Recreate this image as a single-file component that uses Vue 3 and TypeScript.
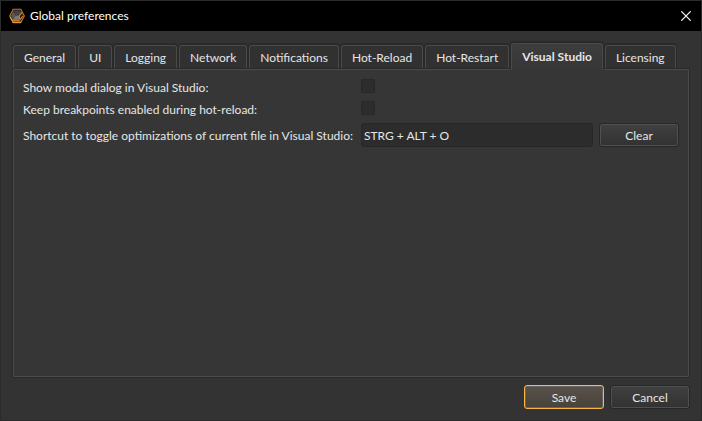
<script setup lang="ts">
import { ref } from 'vue'

const tabs: string[] = [
  'General',
  'UI',
  'Logging',
  'Network',
  'Notifications',
  'Hot-Reload',
  'Hot-Restart',
  'Visual Studio',
  'Licensing',
]
const active = ref('Visual Studio')
const modalDialog = ref(false)
const keepBreakpoints = ref(false)
const shortcut = ref('STRG + ALT + O')
</script>

<template>
  <div class="window">
    <header class="titlebar">
      <svg class="logo" viewBox="0 0 16 16" aria-hidden="true">
        <path d="M4.2 1.2h7.6L15.3 8l-3.5 6.6H4.2L.7 8z" fill="#1c140c" stroke="#c87a20" stroke-width="1.1" />
        <path d="M4.4 2.6h6.4L13 6 9.6 7.6H6.4z" fill="#42444a" />
        <path d="M4.2 3 6.6 7.4 4.2 11.4 2 8z" fill="#56585c" />
        <path d="M6.6 7.4h3.2l1.4 3.8h-7z" fill="#75777b" />
        <path d="M13 4.4 10 8.4l1.4 2.8L14 7.8" fill="none" stroke="#d08024" stroke-width="1.1" />
        <path d="M1.2 9 3 12.2h7.8M3.4 14.2h8.4" fill="none" stroke="#efa13c" stroke-width="1.2" />
      </svg>
      <h1 class="title">Global preferences</h1>
      <button class="close" type="button" aria-label="Close">
        <svg viewBox="0 0 10 10" aria-hidden="true">
          <path d="M.3.3l9.4 9.4M9.7.3L.3 9.7" stroke="#fff" stroke-width="1.2" />
        </svg>
      </button>
    </header>

    <main class="body">
      <div class="tabs" role="tablist">
        <button
          v-for="tab in tabs"
          :key="tab"
          class="tab"
          :class="{ active: tab === active }"
          type="button"
          role="tab"
          :aria-selected="tab === active"
          @click="active = tab"
        >{{ tab }}</button>
      </div>

      <section class="pane" role="tabpanel">
        <div class="form">
          <label for="modal">Show modal dialog in Visual Studio:</label>
          <input id="modal" v-model="modalDialog" class="check" type="checkbox" />
          <label for="breakpoints">Keep breakpoints enabled during hot-reload:</label>
          <input id="breakpoints" v-model="keepBreakpoints" class="check" type="checkbox" />
          <label for="shortcut">Shortcut to toggle optimizations of current file in Visual Studio:</label>
          <div class="shortcut-row">
            <input id="shortcut" v-model="shortcut" class="field" type="text" />
            <button class="btn" type="button" @click="shortcut = ''">Clear</button>
          </div>
        </div>
      </section>

      <footer class="actions">
        <button class="btn primary" type="button">Save</button>
        <button class="btn" type="button">Cancel</button>
      </footer>
    </main>
  </div>
</template>

<style>
body {
  background: #333333;
}
</style>

<style scoped>
.window {
  box-sizing: border-box;
  display: flex;
  flex-direction: column;
  min-height: 100vh;
  border: 1px solid #2b2b2b;
  background: #333333;
  color: #e6e6e6;
  font: 12px/16px Lato, "Noto Sans", sans-serif;
}

button,
input {
  box-sizing: border-box;
  margin: 0;
  color: inherit;
  font: inherit;
}

.titlebar {
  display: flex;
  align-items: center;
  height: 30px;
  padding: 0 10px 0 8px;
  background: #000;
}

.logo {
  width: 16px;
  height: 16px;
}

.title {
  flex: 1;
  margin: 0 0 0 5px;
  color: #fff;
  font: inherit;
}

.close {
  display: flex;
  padding: 0;
  border: 0;
  background: none;
}

.close svg {
  width: 10px;
  height: 10px;
}

.body {
  display: flex;
  flex: 1;
  flex-direction: column;
  padding: 12px 11px 11px;
}

.tabs {
  display: flex;
  align-items: flex-end;
  gap: 2px;
  margin: 0 1px;
}

.tab {
  height: 24px;
  padding: 0 10px;
  border: 1px solid #4a4a4a;
  border-bottom: 0;
  border-radius: 3px 3px 0 0;
  background: #313131;
  box-shadow: 0 -1px 0 1px #2a2a2a;
  white-space: nowrap;
}

.tab.active {
  z-index: 1;
  height: 27px;
  margin-bottom: -1px;
  background: linear-gradient(#3d3d3d, #363636);
  font-weight: 700;
}

.pane {
  flex: 1;
  margin: 0 1px;
  padding: 9px;
  border: 1px solid #4a4a4a;
  background: #363636;
  box-shadow: 0 0 0 1px #2a2a2a;
}

.form {
  display: grid;
  grid-template-columns: auto 1fr;
  grid-template-rows: 16px 16px 24px;
  gap: 6px 8px;
  align-items: center;
}

.form label {
  padding-top: 2px;
}

.check {
  align-self: start;
  width: 14px;
  height: 14px;
  border: 1px solid #282828;
  border-radius: 1px;
  appearance: none;
  background: #2d2d2d;
}

.check:checked {
  background: #f0ad40;
}

.shortcut-row {
  display: flex;
  gap: 6px;
}

.field {
  flex: 1;
  min-width: 0;
  height: 24px;
  padding: 0 2px;
  border: 1px solid #272727;
  border-radius: 3px;
  outline: 0;
  background: #2c2c2c;
}

.btn {
  width: 80px;
  height: 24px;
  padding: 2px 0 0;
  border: 1px solid #272727;
  border-radius: 3px;
  background: linear-gradient(#404040, #323232);
  box-shadow: inset 0 0 0 1px #505050;
}

.btn.primary {
  border-color: #fdb544;
  background: linear-gradient(#58524a, #48423c);
  box-shadow: inset 0 0 0 1px #6a645c;
}

.actions {
  display: flex;
  justify-content: flex-end;
  gap: 6px;
  padding-top: 8px;
}
</style>
